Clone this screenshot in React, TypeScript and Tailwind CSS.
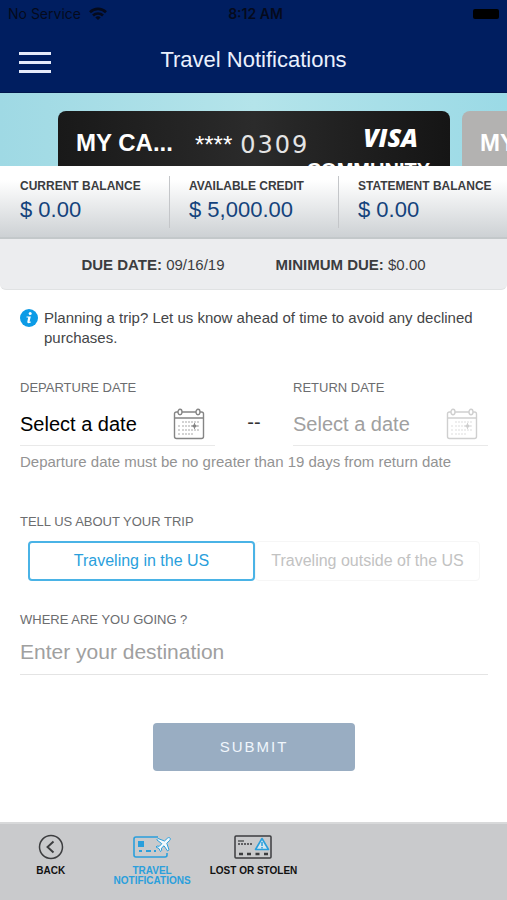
import React, { useState } from "react";

const sans = "font-['Liberation_Sans',Arial,sans-serif]";

function WifiIcon() {
  return (
    <svg width="18" height="14" viewBox="0 0 18 14" fill="none" stroke="#050a1c" strokeWidth="2.6" aria-hidden="true">
      <path d="M1 5.2C5.5 0.8 12.5 0.8 17 5.2" />
      <path d="M4 8.5C6.8 5.8 11.2 5.8 14 8.5" />
      <path d="M9 13L6.3 10.4C7.8 9 10.2 9 11.7 10.4Z" fill="#050a1c" stroke="none" />
    </svg>
  );
}

function CalendarIcon() {
  const rows = [
    { y: 14, xs: [10, 13, 16, 19, 22, 25] },
    { y: 18, xs: [6, 10, 13, 16, 19, 25] },
    { y: 22, xs: [6, 10, 13, 16, 19, 22, 25] },
    { y: 26, xs: [6, 10, 13, 16, 19] },
  ];
  return (
    <svg width="32" height="32" viewBox="0 0 32 32" fill="none" stroke="currentColor" strokeWidth="1.4" aria-hidden="true">
      <path d="M5 4H3.5Q1.5 4 1.5 6V28.5Q1.5 30.5 3.5 30.5H28.5Q30.5 30.5 30.5 28.5V6Q30.5 4 28.5 4H27M9 4H23M1.5 10H30.5" />
      <ellipse cx="7" cy="4" rx="2" ry="2.7" />
      <ellipse cx="25" cy="4" rx="2" ry="2.7" />
      {rows.map((r) =>
        r.xs.map((x) => <circle key={x + "-" + r.y} cx={x} cy={r.y} r="0.7" fill="currentColor" stroke="none" />)
      )}
      <circle cx="21.5" cy="18" r="1.8" fill="currentColor" stroke="none" />
      <path d="M21.5 15V21M18.5 18H24.5" strokeWidth="0.9" />
    </svg>
  );
}

function BackIcon() {
  return (
    <svg width="26" height="26" viewBox="0 0 26 26" fill="none" stroke="#3c3d3f" strokeWidth="1.5" aria-hidden="true">
      <circle cx="13" cy="13" r="11.5" />
      <path d="M15.5 7.5L9.5 13L15.5 18.5" strokeWidth="1.9" />
    </svg>
  );
}

function TravelIcon() {
  return (
    <svg width="38" height="26" viewBox="0 0 38 26" fill="none" stroke="#2a9fdc" strokeWidth="1.6" aria-hidden="true">
      <path d="M25 3H3Q1 3 1 5V21Q1 23 3 23H32Q34 23 34 21V19" />
      <rect x="5" y="7" width="6" height="6" fill="#2a9fdc" stroke="none" />
      <path d="M6 17H9M13 17H18M21 17H23" strokeWidth="1.8" />
      <path
        d="M37 4C36.2 3.2 35 3.6 34 4.6L31.5 7L25 4.5L23.8 5.8L28.8 9.7L26.3 12.3L24 12L23 13L26 14.6L27.5 17.6L28.6 16.5L28.4 14.2L31 11.8L34.6 17L36 15.8L33.8 9.3L36.2 6.9C37.2 5.9 37.7 4.8 37 4Z"
        fill="#f4f9fc"
        strokeWidth="1"
      />
    </svg>
  );
}

function LostIcon() {
  return (
    <svg width="38" height="26" viewBox="0 0 38 26" fill="none" stroke="#3c3d3f" strokeWidth="1.5" aria-hidden="true">
      <rect x="1" y="2" width="36" height="22" rx="1" />
      <path d="M4 7H10" strokeWidth="1.2" />
      <path d="M4 10H19" strokeWidth="1.3" strokeDasharray="2 1" />
      <path d="M5 20H9M13 20H17M21.5 20H25.5M30 20H34" strokeWidth="2.6" />
      <path d="M28 4.5L34.5 15.5H21.5Z" stroke="#2a9fdc" strokeWidth="1.6" strokeLinejoin="round" fill="#d6e6ef" />
      <path d="M28 8V12M28 13V14.4" stroke="#2a9fdc" strokeWidth="1.5" />
    </svg>
  );
}

function Balance({ label, value }: { label: string; value: string }) {
  return (
    <div className="flex-1">
      <div className="whitespace-nowrap text-xs leading-5 font-bold text-[#3b3c3f]">{label}</div>
      <div className="text-[22px] leading-7 text-[#14437c]">{value}</div>
    </div>
  );
}

function DateField({ id, label, disabled }: { id: string; label: string; disabled?: boolean }) {
  const field = disabled ? "placeholder:text-[#a0a0a0]" : "placeholder:text-black";
  return (
    <div className="min-w-0">
      <label htmlFor={id} className="block text-[13px] leading-5 text-[#6c6d6f]">
        {label}
      </label>
      <div className="mt-1 flex h-11 items-center border-b border-[#e9e9e9]">
        <input
          id={id}
          type="text"
          readOnly
          disabled={disabled}
          placeholder="Select a date"
          className={"w-full min-w-0 flex-1 bg-transparent text-xl outline-none placeholder:opacity-100 " + field}
        />
        <button
          type="button"
          aria-label={"Open calendar for " + label.toLowerCase()}
          disabled={disabled}
          className={"mr-2.5 flex-none " + (disabled ? "text-[#cfcfcf]" : "text-[#858585]")}
        >
          <CalendarIcon />
        </button>
      </div>
    </div>
  );
}

function TripOption({ label, checked, onSelect }: { label: string; checked: boolean; onSelect: () => void }) {
  const look = checked ? "border-2 border-[#4ab3e6] text-[#2a9fdc]" : "border border-[#f6f6f6] text-[#c2c2c2]";
  return (
    <label className={"relative flex h-10 flex-1 cursor-pointer items-center justify-center rounded-sm text-base whitespace-nowrap " + look}>
      <input type="radio" name="trip" className="sr-only" checked={checked} onChange={onSelect} />
      {label}
    </label>
  );
}

function NavItem({ label, icon, active }: { label: string; icon: React.ReactNode; active?: boolean }) {
  return (
    <a
      href="#"
      className={"flex flex-col items-center text-center text-[10px] leading-[10px] font-bold " + (active ? "text-[#2a9fdc]" : "text-[#111]")}
    >
      {icon}
      <span className="mt-[6px]">{label}</span>
    </a>
  );
}

export default function App() {
  const [trip, setTrip] = useState("us");
  return (
    <div className={"flex min-h-screen flex-col overflow-x-hidden bg-white " + sans}>
      <header className="border-b border-[#00174c] bg-[#001e60]">
        <div className="grid h-7 grid-cols-3 items-center px-2 font-['Inter',sans-serif] text-sm text-[#050a1c]">
          <div className="flex items-center gap-2">
            <span>No Service</span>
            <WifiIcon />
          </div>
          <span className="pl-1 text-center font-semibold">8:12 AM</span>
          <span className="h-2.5 w-[26px] justify-self-end rounded-xs bg-black" />
        </div>
        <div className="grid h-16 grid-cols-[32px_1fr_32px] items-center px-[19px]">
          <button type="button" aria-label="Menu" className="flex flex-col gap-[6px] pt-1">
            <span className="h-[3px] w-full bg-[#e6ebfa]" />
            <span className="h-[3px] w-full bg-[#e6ebfa]" />
            <span className="h-[3px] w-full bg-[#e6ebfa]" />
          </button>
          <h1 className="text-center text-[22px] leading-8 text-[#eaf0fd]">Travel Notifications</h1>
        </div>
      </header>

      <section className="flex h-[73px] gap-3 overflow-hidden bg-linear-to-r from-[#9fd9e4] via-[#b4e4ea] to-[#9bdae6] pt-[18px] pl-[58px]">
        <div className="h-56 w-[392px] flex-none rounded-lg bg-linear-to-r from-[#191919] via-[#2b2b2b] to-[#151515] pr-5 pl-[18px] text-white">
          <div className="flex h-12 items-center pt-4">
            <span className="text-2xl font-bold">MY CA...</span>
            <span className="ml-[22px] pt-1 text-2xl">****</span>
            <span className="ml-2 pt-1 font-['DejaVu_Sans',sans-serif] text-2xl tracking-[2px] text-[#e4e4e4]">0309</span>
            <span className="ml-auto pr-3 pb-3 font-['Open_Sans',sans-serif] text-[25px] leading-7 font-extrabold italic">VISA</span>
          </div>
          <div className="text-right text-xl leading-[22px] font-bold">COMMUNITY</div>
        </div>
        <div className="h-56 w-[392px] flex-none rounded-lg bg-[#b3b2b1] pl-[18px] text-white">
          <div className="flex h-12 items-center pt-4 text-2xl font-bold">MY CARD</div>
        </div>
      </section>

      <section className="flex h-[73px] border-b-2 border-[#c3c8ca] bg-linear-to-b from-white from-20% to-[#cdd1d4] pt-[10px] pl-5">
        <Balance label="CURRENT BALANCE" value="$ 0.00" />
        <span className="mr-[19px] h-[52px] w-px bg-[#c4c6c9]" />
        <Balance label="AVAILABLE CREDIT" value="$ 5,000.00" />
        <span className="mr-[19px] h-[52px] w-px bg-[#c4c6c9]" />
        <Balance label="STATEMENT BALANCE" value="$ 0.00" />
      </section>

      <section className="flex h-[51px] items-center justify-center gap-[51px] rounded-b-md border-b border-[#e0e2e3] bg-[#ecedef] pt-0.5 text-[15px] text-[#3b3c3f]">
        <p>
          <strong>DUE DATE:</strong> 09/16/19
        </p>
        <p>
          <strong>MINIMUM DUE:</strong> $0.00
        </p>
      </section>

      <main className="pt-[18px] pr-[19px] pb-8 pl-5">
        <div className="flex gap-[6px] text-[15px] leading-5 text-[#444547]">
          <svg width="18" height="20" viewBox="0 0 18 20" className="flex-none" aria-hidden="true">
            <circle cx="9" cy="10" r="9" fill="#0c9be6" />
            <circle cx="10.2" cy="5.6" r="1.5" fill="#fff" />
            <path d="M6.6 8.4H10.8L9.6 13.4Q9.5 14.2 11 13.4L10.8 14.5Q7 16.2 7.3 13.7L8.2 9.5H6.5Z" fill="#fff" />
          </svg>
          <p>Planning a trip? Let us know ahead of time to avoid any declined purchases.</p>
        </div>

        <form onSubmit={(e) => e.preventDefault()}>
          <div className="mt-[30px] grid grid-cols-[1fr_78px_1fr]">
            <DateField id="departure" label="DEPARTURE DATE" />
            <span className="pt-8 text-center text-xl leading-6 text-[#333]">--</span>
            <DateField id="return" label="RETURN DATE" disabled />
          </div>
          <p className="mt-[6px] text-[15px] leading-5 text-[#939393]">
            Departure date must be no greater than 19 days from return date
          </p>

          <fieldset className="mt-10">
            <legend className="text-[13px] leading-5 text-[#6c6d6f]">TELL US ABOUT YOUR TRIP</legend>
            <div className="mx-2 mt-[9px] flex">
              <TripOption label="Traveling in the US" checked={trip === "us"} onSelect={() => setTrip("us")} />
              <TripOption label="Traveling outside of the US" checked={trip === "abroad"} onSelect={() => setTrip("abroad")} />
            </div>
          </fieldset>

          <label htmlFor="destination" className="mt-[29px] block text-[13px] leading-5 text-[#6c6d6f]">
            WHERE ARE YOU GOING ?
          </label>
          <input
            id="destination"
            type="text"
            placeholder="Enter your destination"
            className="block h-[45px] w-full border-b border-[#e4e4e4] bg-transparent text-[21px] outline-none placeholder:text-[#a0a0a0] placeholder:opacity-100"
          />

          <button
            type="submit"
            className="mx-auto mt-12 block h-12 w-[202px] rounded-sm bg-[#99adc2] text-[15px] tracking-[2px] text-[#f0f6fc]"
          >
            SUBMIT
          </button>
        </form>
      </main>

      <nav className="mt-auto grid min-h-[78px] grid-cols-5 border-t-2 border-[#d8d9da] bg-[#c9cacc] pt-[10px]">
        <NavItem label="BACK" icon={<BackIcon />} />
        <NavItem label="TRAVEL NOTIFICATIONS" icon={<TravelIcon />} active />
        <NavItem label="LOST OR STOLEN" icon={<LostIcon />} />
      </nav>
    </div>
  );
}
